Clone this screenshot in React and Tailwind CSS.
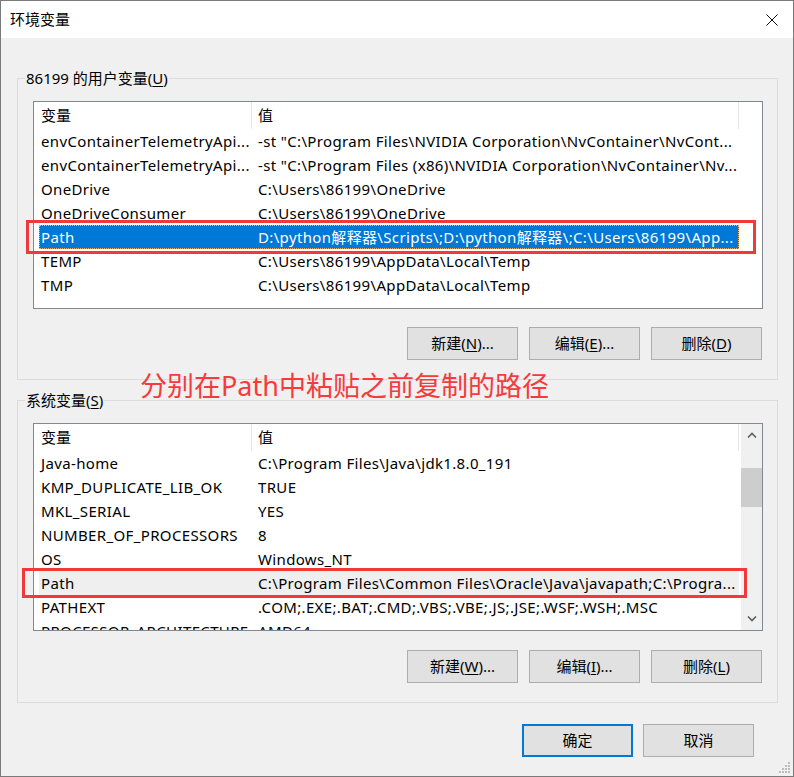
import React from "react";

const U = ({ children }) => <span className="underline underline-offset-2">{children}</span>;

function Btn({ children, primary }) {
  return (
    <div
      className={
        "w-[111px] h-[33px] flex items-center justify-center bg-[#e1e1e1] text-[15px] leading-none " +
        (primary ? "border-2 border-[#0078d7]" : "border border-[#adadad]")
      }
    >
      {children}
    </div>
  );
}

function Header() {
  return (
    <div className="h-[27px] flex items-center shrink-0">
      <div className="w-[218px] h-full flex items-center pl-[7px] border-r border-[#e5e5e5]">变量</div>
      <div className="w-[487px] h-full flex items-center pl-[6px] border-r border-[#e5e5e5]">值</div>
    </div>
  );
}

function Row({ name, value, variant }) {
  const hl =
    variant === "sel"
      ? "bg-[#0078d7] text-white outline outline-1 outline-dotted outline-[#e8b070] -outline-offset-1"
      : variant === "gray"
      ? "bg-[#efefef]"
      : "";
  return (
    <div className="h-[24px] flex pl-[5px] shrink-0">
      <div className={"w-[700px] h-full flex items-center tracking-[0.35px] " + hl}>
        <div className="w-[213px] pl-[2px] whitespace-nowrap overflow-hidden">{name}</div>
        <div className="w-[487px] pl-[6px] whitespace-nowrap overflow-hidden">{value}</div>
      </div>
    </div>
  );
}

function Group({ legend, children }) {
  return (
    <fieldset className="border border-[#dcdcdc] p-0 m-0 min-w-0">
      <legend className="ml-[7px] px-[1px] h-[20px] leading-[20px] text-[15px]">{legend}</legend>
      {children}
    </fieldset>
  );
}

export default function App() {
  const userRows = [
    ["envContainerTelemetryApi...", "-st \"C:\\Program Files\\NVIDIA Corporation\\NvContainer\\NvCont..."],
    ["envContainerTelemetryApi...", "-st \"C:\\Program Files (x86)\\NVIDIA Corporation\\NvContainer\\Nv..."],
    ["OneDrive", "C:\\Users\\86199\\OneDrive"],
    ["OneDriveConsumer", "C:\\Users\\86199\\OneDrive"],
    ["Path", "D:\\python解释器\\Scripts\\;D:\\python解释器\\;C:\\Users\\86199\\App...", "sel"],
    ["TEMP", "C:\\Users\\86199\\AppData\\Local\\Temp"],
    ["TMP", "C:\\Users\\86199\\AppData\\Local\\Temp"],
  ];
  const sysRows = [
    ["Java-home", "C:\\Program Files\\Java\\jdk1.8.0_191"],
    ["KMP_DUPLICATE_LIB_OK", "TRUE"],
    ["MKL_SERIAL", "YES"],
    ["NUMBER_OF_PROCESSORS", "8"],
    ["OS", "Windows_NT"],
    ["Path", "C:\\Program Files\\Common Files\\Oracle\\Java\\javapath;C:\\Progra...", "gray"],
    ["PATHEXT", ".COM;.EXE;.BAT;.CMD;.VBS;.VBE;.JS;.JSE;.WSF;.WSH;.MSC"],
    ["PROCESSOR_ARCHITECTURE", "AMD64"],
  ];

  return (
    <div className="w-[794px] h-[777px] relative flex flex-col bg-[#f0f0f0] border border-[#7a7a7a] text-[15px] text-black font-['Noto_Sans','Noto_Sans_CJK_SC',sans-serif] overflow-hidden">
      {/* title bar */}
      <div className="h-[37px] bg-white flex items-center justify-between pl-[9px] pr-[15px] shrink-0">
        <span className="leading-none">环境变量</span>
        <svg width="12" height="12" viewBox="0 0 12 12">
          <path d="M0.5 0.5 L11.5 11.5 M11.5 0.5 L0.5 11.5" stroke="#111" strokeWidth="1" fill="none" />
        </svg>
      </div>

      <div className="flex flex-col pl-[16px] pr-[15px] pt-[30px]">
        <Group
          legend={
            <>
              86199 的用户变量(<U>U</U>)
            </>
          }
        >
          <div className="pl-[15px] pt-[13px] pb-[19px]">
            <div className="w-[730px] h-[208px] border border-[#828790] bg-white flex flex-col overflow-hidden">
              <Header />
              {userRows.map((r, i) => (
                <Row key={i} name={r[0]} value={r[1]} variant={r[2]} />
              ))}
            </div>
            <div className="w-[730px] flex justify-end gap-[11px] mt-[18px] pr-[1px]">
              <Btn>新建(<U>N</U>)...</Btn>
              <Btn>编辑(<U>E</U>)...</Btn>
              <Btn>删除(<U>D</U>)</Btn>
            </div>
          </div>
        </Group>

        <div className="mt-[10px]">
          <Group
            legend={
              <>
                系统变量(<U>S</U>)
              </>
            }
          >
            <div className="pl-[15px] pt-[13px] pb-[19px]">
              <div className="w-[730px] h-[208px] border border-[#828790] bg-white flex overflow-hidden">
                <div className="flex-1 flex flex-col overflow-hidden">
                  <Header />
                  {sysRows.map((r, i) => (
                    <Row key={i} name={r[0]} value={r[1]} variant={r[2]} />
                  ))}
                </div>
                <div className="w-[21px] bg-[#f0f0f0] flex flex-col shrink-0">
                  <div className="h-[22px] flex items-center justify-center">
                    <svg width="10" height="6" viewBox="0 0 10 6">
                      <path d="M1 5.5 L5 1.5 L9 5.5" stroke="#606060" strokeWidth="1.6" fill="none" />
                    </svg>
                  </div>
                  <div className="h-[22px]" />
                  <div className="h-[39px] bg-[#cdcdcd]" />
                  <div className="flex-1" />
                  <div className="h-[22px] flex items-center justify-center">
                    <svg width="10" height="6" viewBox="0 0 10 6">
                      <path d="M1 0.5 L5 4.5 L9 0.5" stroke="#606060" strokeWidth="1.6" fill="none" />
                    </svg>
                  </div>
                </div>
              </div>
              <div className="w-[730px] flex justify-end gap-[11px] mt-[19px] pr-[1px]">
                <Btn>新建(<U>W</U>)...</Btn>
                <Btn>编辑(<U>I</U>)...</Btn>
                <Btn>删除(<U>L</U>)</Btn>
              </div>
            </div>
          </Group>
        </div>

        <div className="flex justify-end gap-[10px] mt-[21px] pr-[24px]">
          <Btn primary>确定</Btn>
          <Btn>取消</Btn>
        </div>
      </div>

      {/* annotation overlays */}
      <div className="absolute left-[139px] top-[368px] text-[length:27px] leading-[34px] text-[#f53b3b] whitespace-nowrap">
        分别在Path中粘贴之前复制的路径
      </div>
      <div className="absolute left-[25px] top-[219px] w-[730px] h-[34px] border-[3px] border-[#f03a3a]" />
      <div className="absolute left-[21px] top-[567px] w-[725px] h-[30px] border-[3px] border-[#f03a3a]" />

      {/* resize grip */}
      <svg className="absolute right-[2px] bottom-[2px]" width="12" height="12" viewBox="0 0 12 12">
        <g fill="#bdbdbd">
          <rect x="9" y="0" width="2" height="2" />
          <rect x="6" y="3" width="2" height="2" />
          <rect x="9" y="3" width="2" height="2" />
          <rect x="3" y="6" width="2" height="2" />
          <rect x="6" y="6" width="2" height="2" />
          <rect x="9" y="6" width="2" height="2" />
          <rect x="0" y="9" width="2" height="2" />
          <rect x="3" y="9" width="2" height="2" />
          <rect x="6" y="9" width="2" height="2" />
          <rect x="9" y="9" width="2" height="2" />
        </g>
      </svg>
    </div>
  );
}
